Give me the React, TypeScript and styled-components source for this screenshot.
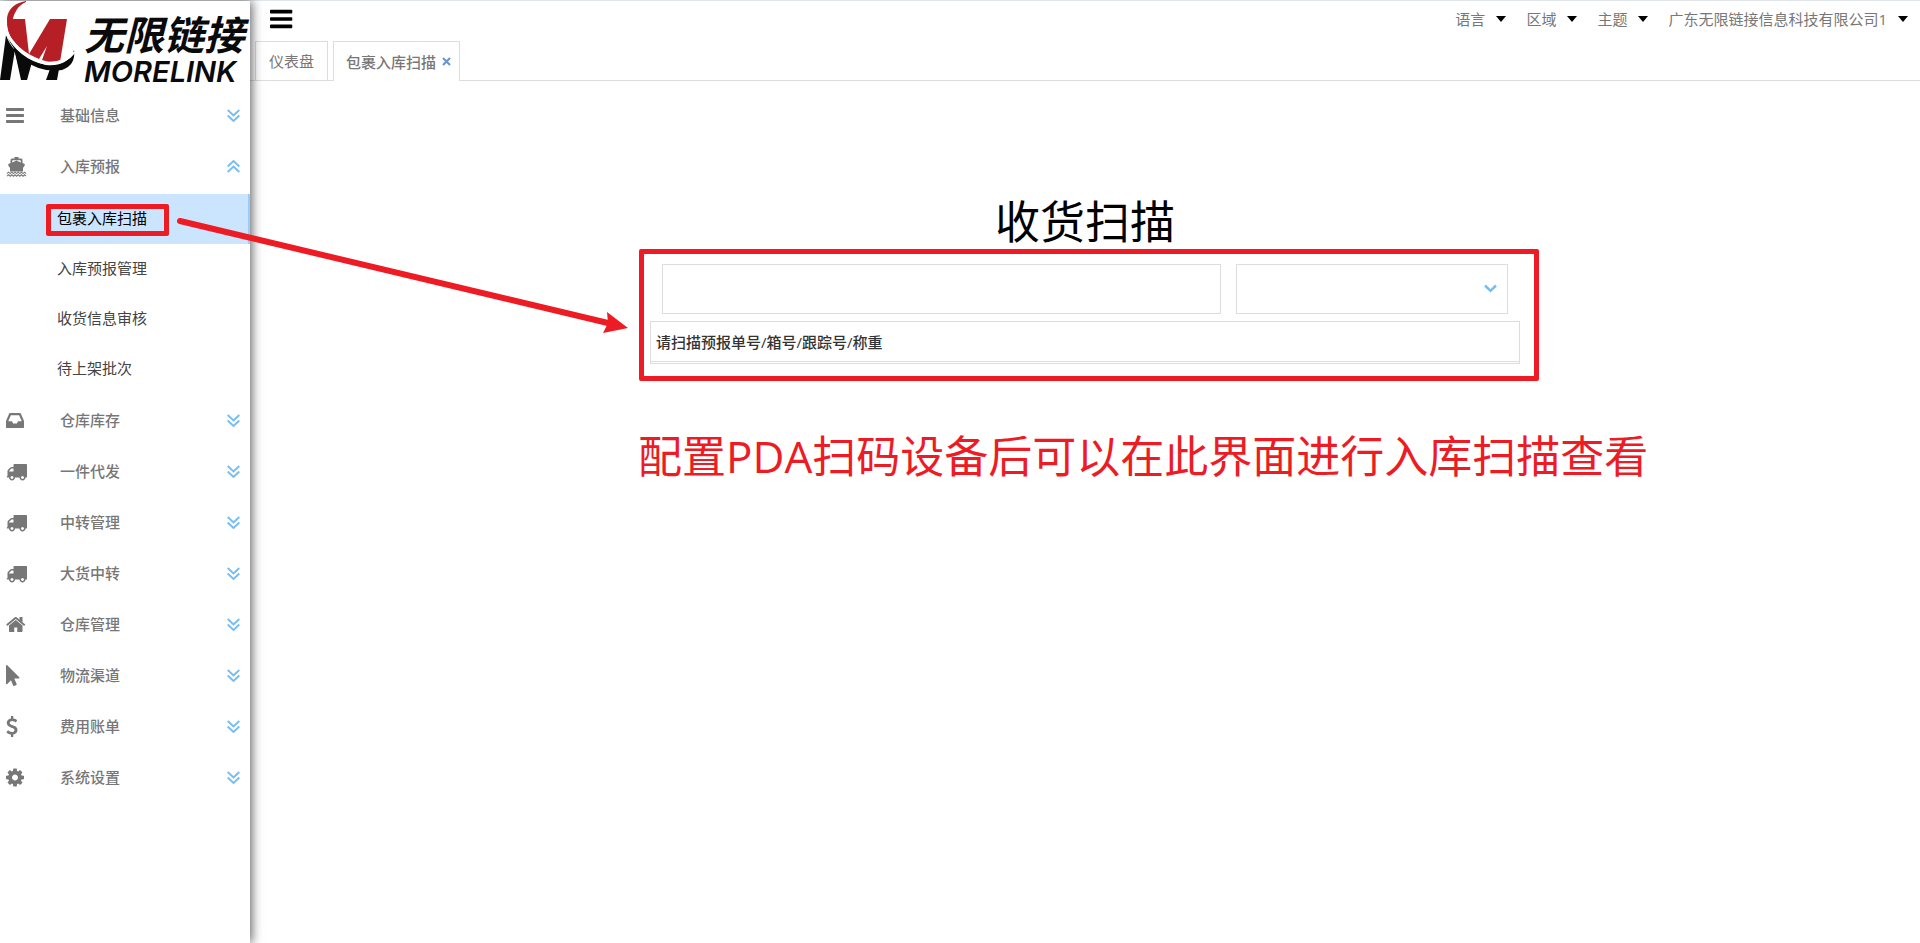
import React from 'react';
import styled, { createGlobalStyle, css } from 'styled-components';

const RED = '#ed1c24';

const GlobalStyle = createGlobalStyle`
  * { box-sizing: border-box; }
  body {
    margin: 0;
    background: #fff;
    color: #777;
    font-family: "Open Sans", "Noto Sans CJK SC", sans-serif;
    font-size: 15px;
    line-height: 20px;
  }
  button, input, select { font: inherit; color: inherit; }
  ul { list-style: none; margin: 0; padding: 0; }
`;

const Page = styled.div`
  position: relative;
  display: grid;
  grid-template-columns: 250px minmax(0, 1fr);
  min-height: 100vh;
  border-top: 1px solid #e1e6eb;
`;

const Sidebar = styled.aside`
  position: relative;
  z-index: 1;
  background: #fff;
  box-shadow: 2px 0 10px rgba(0, 0, 0, 0.6);
`;

const Brand = styled.a`
  display: flex;
  height: 89px;
  color: #0a0a0a;
  text-decoration: none;
`;

const BrandMark = styled.svg`
  flex: none;
  width: 76px;
  height: 82px;
`;

const BrandWords = styled.span`
  display: flex;
  flex-direction: column;
  gap: 4px;
  padding: 12px 0 0 8px;
  font-style: italic;
  white-space: nowrap;
`;

const BrandName = styled.span`
  font-family: "Noto Sans CJK SC", sans-serif;
  font-size: 40px;
  font-weight: 700;
  line-height: 40px;
`;

const BrandLatin = styled.span`
  font-family: Inter, sans-serif;
  font-size: 29px;
  font-weight: 600;
  line-height: 30px;
`;

const MenuButton = styled.button`
  display: flex;
  align-items: center;
  width: 100%;
  height: 51px;
  padding: 0 10px 0 6px;
  border: 0;
  background: none;
  font-weight: 500;
  text-align: left;
  cursor: pointer;
`;

const MenuIcon = styled.span`
  display: flex;
  width: 54px;
`;

const MenuLabel = styled.span`
  flex: 1;
  padding-bottom: 2px;
`;

const SubMenu = styled.ul`
  padding: 2px 0 1px;
`;

const SubItem = styled.li`
  position: relative;
`;

const SubLink = styled.a<{ $active?: boolean }>`
  display: flex;
  align-items: center;
  height: 50px;
  padding: 0 0 2px 57px;
  color: #444;
  text-decoration: none;
  ${({ $active }) =>
    $active &&
    css`
      background: #cce5ff;
      border-right: 2px solid #99ccff;
      color: #000;
    `}
`;

const MenuMark = styled.span`
  position: absolute;
  top: 10px;
  left: 46px;
  width: 123px;
  height: 32px;
  border: 5px solid ${RED};
  border-radius: 2px;
  pointer-events: none;
`;

const Main = styled.div`
  min-width: 0;
`;

const TopBar = styled.header`
  display: flex;
  align-items: flex-start;
  justify-content: space-between;
  height: 40px;
  padding: 5px 12px 0 20px;
`;

const IconButton = styled.button`
  display: flex;
  padding: 0;
  border: 0;
  background: none;
  color: #000;
  cursor: pointer;
`;

const TopMenus = styled.nav`
  display: flex;
  gap: 20px;
  padding-top: 3px;
`;

const TopMenu = styled.button`
  display: flex;
  align-items: center;
  gap: 11px;
  padding: 0;
  border: 0;
  background: none;
  cursor: pointer;
`;

const Caret = styled.span`
  border: 5px solid transparent;
  border-top: 6px solid #000;
  border-bottom: 0;
`;

const Tabs = styled.div`
  display: flex;
  gap: 5px;
  height: 40px;
  padding-left: 5px;
  border-bottom: 1px solid #ddd;
`;

const Tab = styled.div<{ $active?: boolean }>`
  display: flex;
  align-items: center;
  gap: 6px;
  height: ${({ $active }) => ($active ? 40 : 39)}px;
  padding: 0 ${({ $active }) => ($active ? 8 : 13)}px 0 ${({ $active }) => ($active ? 12 : 13)}px;
  border: 1px solid #ddd;
  border-bottom: 0;
  background: #fff;
  font-weight: ${({ $active }) => ($active ? 500 : 400)};
`;

const TabButton = styled.button`
  padding: 0;
  border: 0;
  background: none;
  font-weight: inherit;
  cursor: pointer;
`;

const CloseButton = styled(IconButton)`
  color: #6b93cc;
`;

const Content = styled.main`
  display: flex;
  flex-direction: column;
  align-items: center;
  padding: 111px 24px 0;
`;

const Title = styled.h1`
  margin: 0 0 12px;
  color: #000;
  font-size: 45px;
  font-weight: 400;
  line-height: 60px;
`;

const ScanForm = styled.form`
  position: relative;
  display: flex;
  flex-direction: column;
  gap: 7px;
  width: 100%;
  max-width: 870px;
`;

const Fields = styled.div`
  display: grid;
  grid-template-columns: minmax(0, 1fr) 272px;
  gap: 15px;
  padding: 0 12px;
`;

const fieldLook = css`
  width: 100%;
  height: 50px;
  padding: 0 12px;
  border: 1px solid #ddd;
  border-radius: 0;
  background: #fff;
`;

const ScanInput = styled.input`
  ${fieldLook}
`;

const SelectWrap = styled.div`
  display: grid;
  align-items: center;
  & > * { grid-area: 1 / 1; }
  & > svg {
    justify-self: end;
    margin: 0 11px 2px 0;
    pointer-events: none;
  }
`;

const ScanSelect = styled.select`
  ${fieldLook}
  appearance: none;
`;

const ResultTable = styled.table`
  width: 100%;
  border: 1px solid #ddd;
  border-spacing: 0;
  th {
    height: 40px;
    padding: 0 5px;
    border-bottom: 1px solid #ddd;
    color: #333;
    font-weight: 500;
    text-align: left;
  }
  td { height: 1px; padding: 0; }
`;

const FormMark = styled.span`
  position: absolute;
  top: -15px;
  right: -19px;
  bottom: -17px;
  left: -11px;
  border: 5px solid ${RED};
  border-radius: 2px;
  pointer-events: none;
`;

const Note = styled.p`
  position: absolute;
  top: 162px;
  left: -12px;
  margin: 0;
  color: ${RED};
  font-size: 44px;
  line-height: 60px;
  white-space: nowrap;
`;

const Arrow = styled.svg`
  position: absolute;
  z-index: 2;
  top: 209px;
  left: 170px;
  pointer-events: none;
`;

const paths = {
  bars: 'M1664 1344v128q0 26-19 45t-45 19h-1408q-26 0-45-19t-19-45v-128q0-26 19-45t45-19h1408q26 0 45 19t19 45zm0-512v128q0 26-19 45t-45 19h-1408q-26 0-45-19t-19-45v-128q0-26 19-45t45-19h1408q26 0 45 19t19 45zm0-512v128q0 26-19 45t-45 19h-1408q-26 0-45-19t-19-45v-128q0-26 19-45t45-19h1408q26 0 45 19t19 45z',
  inbox: 'M1151 960h316q-1-3-2.5-8t-2.5-8l-212-496h-708l-212 496q-1 2-2.5 8t-2.5 8h316l95 192h320zm513 30v482q0 26-19 45t-45 19h-1408q-26 0-45-19t-19-45v-482q0-62 25-123l238-552q10-25 36.5-42t52.5-17h832q26 0 52.5 17t36.5 42l238 552q25 61 25 123z',
  truck: 'M640 1408q0-52-38-90t-90-38-90 38-38 90 38 90 90 38 90-38 38-90zm-384-512h384v-256h-158q-13 0-22 9l-195 195q-9 9-9 22v30zm1280 512q0-52-38-90t-90-38-90 38-38 90 38 90 90 38 90-38 38-90zm256-1088v1024q0 15-4 26.5t-13.5 18.5-16.5 11.5-23.5 6-22.5 2-25.5 0-22.5-.5q0 106-75 181t-181 75-181-75-75-181h-384q0 106-75 181t-181 75-181-75-75-181h-64q-3 0-22.5.5t-25.5 0-22.5-2-23.5-6-16.5-11.5-13.5-18.5-4-26.5q0-26 19-45t45-19v-320q0-8-.5-35t0-38 2.5-34.5 6.5-37 14-30.5 22.5-30l198-198q19-19 50.5-32t58.5-13h160v-192q0-26 19-45t45-19h1024q26 0 45 19t19 45z',
  home: 'M1472 992v480q0 26-19 45t-45 19h-384v-384h-256v384h-384q-26 0-45-19t-19-45v-480q0-1 .5-3t.5-3l575-474 575 474q1 2 1 6zm223-69l-62 74q-8 9-21 11h-3q-13 0-21-7l-692-577-692 577q-12 8-24 7-13-2-21-11l-62-74q-8-10-7-23.5t11-21.5l719-599q32-26 76-26t76 26l244 204v-195q0-14 9-23t23-9h192q14 0 23 9t9 23v408l219 182q10 8 11 21.5t-7 23.5z',
  pointer: 'M1389 1043q31 30 14 69-17 40-59 40h-382l201 476q10 25 0 49t-34 35l-177 75q-25 10-49 0t-35-34l-191-452-312 312q-19 19-45 19-12 0-24-5-40-17-40-59v-1504q0-42 40-59 12-5 24-5 27 0 45 19z',
  dollar: 'M1362 1185q0 153-99.5 263.5t-258.5 136.5v175q0 14-9 23t-23 9h-135q-13 0-22.5-9.5t-9.5-22.5v-175q-66-9-127.5-31t-101.5-44.5-74-48-46.5-37.5-17.5-18q-17-21-2-41l103-135q7-10 23-12 15-2 24 9l2 2q113 99 243 125 37 8 74 8 81 0 142.5-43t61.5-122q0-28-15-53t-33.5-42-58.5-37.5-66-32-80-32.5q-39-16-61.5-25t-61.5-26.5-62.5-31-56.5-35.5-53.5-42.5-43.5-49-35.5-58-21-66.5-8.5-78q0-138 98-242t255-134v-180q0-13 9.5-22.5t22.5-9.5h135q14 0 23 9t9 23v176q57 6 110.5 23t87 33.5 63.5 37.5 39 29 15 14q17 18 5 38l-81 146q-8 15-23 16-14 3-27-7-3-3-14.5-12t-39-26.5-58.5-32-74.5-26-85.5-11.5q-95 0-155 43t-60 111q0 26 8.5 48t29.5 41.5 39.5 33 56 31 60.5 27 70 27.5q53 20 81 31.5t76 35 75.5 42.5 62 50 53 63.5 31.5 76.5 13 94z',
  cog: 'M1152 896q0-106-75-181t-181-75-181 75-75 181 75 181 181 75 181-75 75-181zm512-109v222q0 12-8 23t-20 13l-185 28q-19 54-39 91 35 50 107 138 10 12 10 25t-9 23q-27 37-99 108t-94 71q-12 0-26-9l-138-108q-44 23-91 38-16 136-29 186-7 28-36 28h-222q-14 0-24.5-8.5t-11.5-21.5l-28-184q-49-16-90-37l-141 107q-10 9-25 9-14 0-25-11-126-114-165-168-7-10-7-23 0-12 8-23 15-21 51-66.5t54-70.5q-27-50-41-99l-183-27q-13-2-21-12.5t-8-23.5v-222q0-12 8-23t19-13l186-28q14-46 39-92-40-57-107-138-10-12-10-24 0-10 9-23 26-36 98.5-107.5t94.5-71.5q13 0 26 10l138 107q44-23 91-38 16-136 29-186 7-28 36-28h222q14 0 24.5 8.5t11.5 21.5l28 184q49 16 90 37l142-107q9-9 24-9 13 0 25 10 129 119 165 170 7 8 7 22 0 12-8 23-15 21-51 66.5t-54 70.5q26 50 41 98l183 28q13 2 21 12.5t8 23.5z',
};

/* Left edge of each glyph inside its 1792-unit box. */
const leftEdge = { bars: 128, inbox: 128, truck: 0, home: 64, pointer: 256, dollar: 384, cog: 128 };

type GlyphName = keyof typeof paths;

function Glyph({ name, size = 21 }: { name: GlyphName; size?: number }) {
  return (
    <svg width={size} height={size} viewBox={`${leftEdge[name]} 0 1792 1792`} fill="currentColor" aria-hidden="true">
      <path d={paths[name]} />
    </svg>
  );
}

function Ship() {
  return (
    <svg width="21" height="21" viewBox="0 0 21 21" fill="currentColor" aria-hidden="true">
      <path d="M8.500 1h4v1.500h2.500q1.500 0 1.500 1.500v3l1.600.8q1.200.6.6 1.700L17 12v3.500H4V12L2.300 9.500Q1.700 8.400 2.900 7.800L4.500 7V4Q4.500 2.500 6 2.500h2.500zM6.300 4.300v2.200l4.200-2 4.200 2V4.300z" fillRule="evenodd" />
      <path d="M1 17.600l1.600-1.400 1.600 1.400 1.600-1.400 1.600 1.400L9 16.200l1.600 1.400 1.600-1.400 1.600 1.400 1.600-1.400 1.600 1.400 1.600-1.400L20 17.600M1 20.200l1.600-1.400 1.600 1.400 1.600-1.400 1.600 1.400L9 18.800l1.600 1.400 1.600-1.400 1.600 1.400 1.600-1.400 1.600 1.400 1.600-1.400L20 20.200" fill="none" stroke="currentColor" strokeWidth="1.100" />
    </svg>
  );
}

function DoubleChevron({ up }: { up?: boolean }) {
  return (
    <svg width="13" height="13" viewBox="0 0 13 13" fill="none" stroke="#78bdf2" strokeWidth="1.900" aria-hidden="true">
      <path d={up ? 'M.7 6.500L6.500 1l5.800 5.500M.7 12L6.500 6.500l5.800 5.500' : 'M.7 1l5.800 5.500L12.300 1M.7 6.500L6.500 12l5.800-5.500'} />
    </svg>
  );
}

function Logo() {
  return (
    <Brand href="#">
      <BrandMark viewBox="0 0 76 82" aria-hidden="true">
        <path d="M6 34Q9 43 15 49L10 79H0zM14 47Q22 56 32 61L27 79H21zM50 68Q54 69 59 68L57 79H46z" fill="#0a0a0a" />
        <path d="M14 47Q21 55 28 59L27 79H22z" fill="#0a0a0a" />
        <path d="M10 18H25L29 53L50 18H67L60 61Q50 62 42 59L47 45L39 58Q15 48 9 31Q7 24 10 18z" fill="#b61f26" />
        <path d="M26 0Q9 3 7 17Q6 31 14 41Q9 26 14 14Q18 4 26 1z" fill="#b61f26" />
        <path d="M6 33Q20 58 46 64Q68 66 74 49Q76 64 62 69Q24 74 6 33z" fill="#0a0a0a" />
        <path d="M6 31Q20 57 45 62Q64 64 74 51" fill="none" stroke="#fff" strokeWidth="3" />
      </BrandMark>
      <BrandWords>
        <BrandName>无限链接</BrandName>
        <BrandLatin>MORELINK</BrandLatin>
      </BrandWords>
    </Brand>
  );
}

type MenuEntry = { label: string; icon: GlyphName | 'ship'; children?: string[] };

const menu: MenuEntry[] = [
  { label: '基础信息', icon: 'bars' },
  { label: '入库预报', icon: 'ship', children: ['包裹入库扫描', '入库预报管理', '收货信息审核', '待上架批次'] },
  { label: '仓库库存', icon: 'inbox' },
  { label: '一件代发', icon: 'truck' },
  { label: '中转管理', icon: 'truck' },
  { label: '大货中转', icon: 'truck' },
  { label: '仓库管理', icon: 'home' },
  { label: '物流渠道', icon: 'pointer' },
  { label: '费用账单', icon: 'dollar' },
  { label: '系统设置', icon: 'cog' },
];

const topMenus = ['语言', '区域', '主题', '广东无限链接信息科技有限公司1'];

export default function App() {
  return (
    <>
      <GlobalStyle />
      <Page>
        <Sidebar>
          <Logo />
          <nav aria-label="主菜单">
            <ul>
              {menu.map(({ label, icon, children }) => (
                <li key={label}>
                  <MenuButton type="button" aria-expanded={Boolean(children)}>
                    <MenuIcon>{icon === 'ship' ? <Ship /> : <Glyph name={icon} />}</MenuIcon>
                    <MenuLabel>{label}</MenuLabel>
                    <DoubleChevron up={Boolean(children)} />
                  </MenuButton>
                  {children && (
                    <SubMenu>
                      {children.map((child, i) => (
                        <SubItem key={child}>
                          <SubLink href="#" $active={i === 0}>
                            {child}
                          </SubLink>
                          {i === 0 && <MenuMark />}
                        </SubItem>
                      ))}
                    </SubMenu>
                  )}
                </li>
              ))}
            </ul>
          </nav>
        </Sidebar>

        <Main>
          <TopBar>
            <IconButton type="button" aria-label="切换菜单">
              <Glyph name="bars" size={26} />
            </IconButton>
            <TopMenus aria-label="账户">
              {topMenus.map((label) => (
                <TopMenu key={label} type="button">
                  {label}
                  <Caret />
                </TopMenu>
              ))}
            </TopMenus>
          </TopBar>

          <Tabs>
            <Tab>
              <TabButton type="button">仪表盘</TabButton>
            </Tab>
            <Tab $active>
              <TabButton type="button">包裹入库扫描</TabButton>
              <CloseButton type="button" aria-label="关闭">
                <svg width="9" height="9" viewBox="0 0 9 9" stroke="currentColor" strokeWidth="2" aria-hidden="true">
                  <path d="M1 1l7 7M8 1L1 8" />
                </svg>
              </CloseButton>
            </Tab>
          </Tabs>

          <Content>
            <Title>收货扫描</Title>
            <ScanForm>
              <Fields>
                <ScanInput type="text" aria-label="扫描单号" />
                <SelectWrap>
                  <ScanSelect aria-label="仓库" defaultValue="">
                    <option value="" />
                  </ScanSelect>
                  <svg width="13" height="9" viewBox="0 0 13 9" fill="none" stroke="#78bdf2" strokeWidth="2.500" aria-hidden="true">
                    <path d="M1 1.500l5.500 5.300L12 1.500" />
                  </svg>
                </SelectWrap>
              </Fields>
              <ResultTable>
                <thead>
                  <tr>
                    <th scope="col">请扫描预报单号/箱号/跟踪号/称重</th>
                  </tr>
                </thead>
                <tbody>
                  <tr>
                    <td />
                  </tr>
                </tbody>
              </ResultTable>
              <FormMark />
              <Note>配置PDA扫码设备后可以在此界面进行入库扫描查看</Note>
            </ScanForm>
          </Content>
        </Main>

        <Arrow width="470" height="130" viewBox="170 210 470 130" aria-hidden="true">
          <path d="M180 221L608 323" stroke={RED} strokeWidth="6" strokeLinecap="round" />
          <path d="M628 328L603 333L608 323L607 312z" fill={RED} />
        </Arrow>
      </Page>
    </>
  );
}
